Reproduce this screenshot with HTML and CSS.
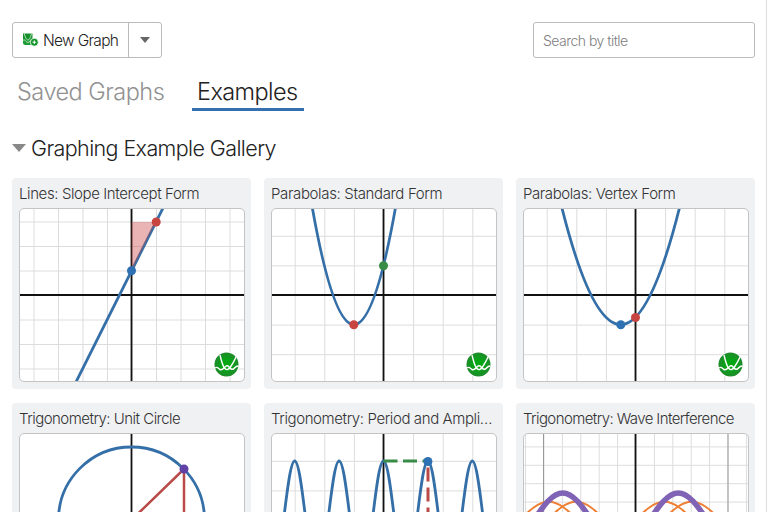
FILE: index.html
```html
<!DOCTYPE html>
<html lang="en">
<head>
<meta charset="UTF-8">
<meta name="viewport" content="width=device-width, initial-scale=1.0">
<title>Graphs</title>
<link rel="stylesheet" href="styles.css">
</head>
<body>
<!-- shared symbols -->
<svg class="defs" width="0" height="0">
  <defs>
    <radialGradient id="green">
      <stop offset="0.4" stop-color="#06a514"/>
      <stop offset="1" stop-color="#1f8a2c"/>
    </radialGradient>
    <pattern id="grid1" width="24.5" height="24.5" patternUnits="userSpaceOnUse">
      <path d="M0 .5H24.5M.5 0V24.5" class="grid"/>
    </pattern>
    <pattern id="grid2" width="29.6" height="29.6" patternUnits="userSpaceOnUse">
      <path d="M0 .5H29.6M.5 0V29.6" class="grid"/>
    </pattern>
    <pattern id="grid3" width="18.4" height="18.4" patternUnits="userSpaceOnUse">
      <path d="M0 .5H18.4M.5 0V18.4" class="grid"/>
    </pattern>
    <symbol id="badge" viewBox="-13 -13 26 26">
      <circle r="12.8" fill="#fff"/>
      <circle r="12" fill="url(#green)"/>
      <g fill="none" stroke="#fff" stroke-width="1.4">
        <path d="M-6.5 -9.5C-5 -3 -4 1 -2 3.5S2 5.5 4 2.5S8 -4 10 -8.5"/>
        <path d="M-11.7 3.5C-9 1.5 -8.5 4 -6.5 5S-3.5 4.5 -1.5 2.5S1.5 1 3 3S6.5 5.5 8 3.5S10 1.5 12 1.5"/>
      </g>
    </symbol>
  </defs>
</svg>

<div class="container">
  <div class="toolbar">
    <div class="new-graph">
      <button class="new-button">
        <svg width="16" height="14" viewBox="0 0 16 14">
          <path d="M0 .5H9.5V8H0Z" fill="#16902b"/>
          <path d="M0 6H8V12H2.5Q0 12 0 9.5Z" fill="#1c9c34"/>
          <path d="M1.2 .5C2.5 5.5 4 7 5 7S7.5 5 8.5 .5M0 7.5C2 5.5 3 9.5 5 9.5S7 6 10 7" fill="none" stroke="#d9f2dc" stroke-width=".8"/>
          <circle cx="11.3" cy="9.2" r="4" fill="#0f9226" stroke="#fff" stroke-width=".8"/>
          <path d="M9.5 9.2H13.1M11.3 7.4V11" stroke="#fff" stroke-width="1"/>
        </svg>
        <span>New Graph</span>
      </button>
      <button class="menu-button"><span class="caret"></span></button>
    </div>
    <input class="search" type="text" placeholder="Search by title">
  </div>

  <div class="tabs">
    <div class="tab">Saved Graphs</div>
    <div class="tab active">Examples</div>
  </div>

  <h2 class="gallery-title"><span class="caret"></span>Graphing Example Gallery</h2>

  <div class="gallery">
    <div class="card">
      <div class="title t1">Lines: Slope Intercept Form</div>
      <svg class="graph" viewBox="-111.5 -86 224 172">
        <rect x="-112" y="-86" width="225" height="172" fill="url(#grid1)"/>
        <path class="axis" d="M-112 0H113M0 -86V86"/>
        <path class="blue" d="M-56 88L32 -88"/>
        <path d="M0 -73L24.5 -73L0 -24Z" fill="#c74440" fill-opacity=".4"/>
        <circle cx="0" cy="-24.2" r="4.5" fill="#2d70b3"/>
        <circle cx="24.7" cy="-73" r="4.5" fill="#c74440"/>
        <use href="#badge" x="82" y="56.5" width="26" height="26"/>
      </svg>
    </div>
    <div class="card">
      <div class="title t2">Parabolas: Standard Form</div>
      <svg class="graph" viewBox="-111.5 -86 224 172">
        <rect x="-112" y="-86" width="225" height="172" fill="url(#grid2)"/>
        <path class="axis" d="M-112 0H113M0 -86V86"/>
        <path class="blue" d="M-74 -103.6Q-29.6 162.8 14.8 -103.6"/>
        <circle cx="-29.7" cy="29.8" r="4.5" fill="#c74440"/>
        <circle cx="0" cy="-29.3" r="4.5" fill="#388c46"/>
        <use href="#badge" x="82" y="56.5" width="26" height="26"/>
      </svg>
    </div>
    <div class="card">
      <div class="title t3">Parabolas: Vertex Form</div>
      <svg class="graph" viewBox="-111.5 -86 224 172">
        <rect x="-112" y="-86" width="225" height="172" fill="url(#grid2)"/>
        <path class="axis" d="M-112 0H113M0 -86V86"/>
        <path class="blue" d="M-74 -88.8Q-14.8 148 44.4 -88.8"/>
        <circle cx="-14.7" cy="29.8" r="4.5" fill="#2d70b3"/>
        <circle cx="0" cy="22.5" r="4.5" fill="#c74440"/>
        <use href="#badge" x="82" y="56.5" width="26" height="26"/>
      </svg>
    </div>
    <div class="card">
      <div class="title t4">Trigonometry: Unit Circle</div>
      <svg class="graph" viewBox="-111.5 -86 224 172">
        <path class="axis" d="M-112 0H113M0 -86V86"/>
        <circle class="blue" r="73"/>
        <path class="red" d="M0 0L52.5 -51V0"/>
        <circle cx="52.5" cy="-51" r="4.5" fill="#6042a6"/>
        <use href="#badge" x="82" y="56.5" width="26" height="26"/>
      </svg>
    </div>
    <div class="card">
      <div class="title t5">Trigonometry: Period and Ampli…</div>
      <svg class="graph" viewBox="-111.5 -86 224 172">
        <rect x="-112" y="-86" width="225" height="172" fill="url(#grid2)"/>
        <path class="axis" d="M-112 0H113M0 -86V86"/>
        <!-- cosine, one half period per segment -->
        <path class="blue" d="M-111 59c8.1 0 14.1 -118 22.2 -118s14.1 118 22.2 118s14.1 -118 22.2 -118s14.1 118 22.2 118s14.1 -118 22.2 -118s14.1 118 22.2 118s14.1 -118 22.2 -118s14.1 118 22.2 118s14.1 -118 22.2 -118s14.1 118 22.2 118"/>
        <path d="M0 -59H44.4" fill="none" stroke="#388c46" stroke-width="3" stroke-dasharray="14 5.5"/>
        <path d="M44.5 -52.5V0" fill="none" stroke="#b94a47" stroke-width="3" stroke-dasharray="14 6"/>
        <circle cx="44.4" cy="-58.5" r="4.5" fill="#2d70b3"/>
        <use href="#badge" x="82" y="56.5" width="26" height="26"/>
      </svg>
    </div>
    <div class="card">
      <div class="title t6">Trigonometry: Wave Interference</div>
      <svg class="graph" viewBox="-111.5 -86 224 172">
        <rect x="-112" y="-86" width="225" height="172" fill="url(#grid3)"/>
        <path d="M-92 -86V86M92.5 -86V86" stroke="#999" stroke-width="1"/>
        <path class="axis" d="M-112 0H113M0 -86V86"/>
        <path class="orange" d="M-144.6 18.2c21 0 36.8 -36.4 57.8 -36.4s36.8 36.4 57.8 36.4s36.8 -36.4 57.8 -36.4s36.8 36.4 57.8 36.4s36.8 -36.4 57.8 -36.4"/>
        <path class="orange" d="M-117.2 18.2c21 0 36.8 -36.4 57.8 -36.4s36.8 36.4 57.8 36.4s36.8 -36.4 57.8 -36.4s36.8 36.4 57.8 36.4s36.8 -36.4 57.8 -36.4"/>
        <path class="purple" d="M-130.6 27c21 0 36.8 -54 57.8 -54s36.8 54 57.8 54s36.8 -54 57.8 -54s36.8 54 57.8 54s36.8 -54 57.8 -54"/>
        <use href="#badge" x="82" y="56.5" width="26" height="26"/>
      </svg>
    </div>
  </div>
</div>
</body>
</html>
```
FILE: styles.css
```css
* {
  box-sizing: border-box;
}
body {
  margin: 0;
  height: 512px;
  overflow: hidden;
  background-color: #fff;
  color: #333;
  font-family: Inter, "Liberation Sans", sans-serif;
  font-weight: 300;
}
.defs {
  display: block;
}
.container {
  width: 767px;
  height: 512px;
  overflow: hidden;
  padding: 22px 12px 0;
  border-right: 1px solid #ddd;
}
.toolbar {
  display: flex;
  justify-content: space-between;
  height: 36px;
}
.new-graph {
  display: flex;
  width: 150px;
  border: 1px solid #bbb;
  border-radius: 3px;
}
button {
  display: flex;
  align-items: center;
  padding: 0;
  border: none;
  background: none;
  color: #222;
  font: inherit;
}
.new-button {
  width: 115px;
  padding-left: 10px;
  gap: 4px;
  font-size: 15.5px;
  letter-spacing: -0.7px;
  white-space: nowrap;
}
.menu-button {
  flex: 1;
  justify-content: center;
  border-left: 1px solid #bbb;
}
.caret {
  border: 5px solid transparent;
  border-top: 6px solid #666;
  border-bottom: none;
}
.search {
  width: 222px;
  margin-right: -1px;
  padding: 0 9px;
  border: 1px solid #bbb;
  border-radius: 3px;
  font: inherit;
  font-size: 14px;
  letter-spacing: -0.52px;
}
.search::placeholder {
  color: #808080;
}
.tabs {
  display: flex;
  gap: 20px;
  margin-top: 14px;
}
.tab {
  width: 160px;
  height: 39px;
  padding: 0 5px;
  color: #929292;
  font-size: 23.5px;
  line-height: 40px;
  letter-spacing: -0.5px;
  white-space: nowrap;
}
.tab.active {
  width: 112px;
  border-bottom: 3px solid #3470b0;
  color: #222;
  letter-spacing: -0.6px;
}
.gallery-title {
  display: flex;
  align-items: center;
  gap: 5px;
  height: 30px;
  margin: 22px 0 15px;
  color: #222;
  font-size: 21.5px;
  font-weight: 300;
  letter-spacing: -0.6px;
}
.gallery-title .caret {
  border-width: 8px 7px 0;
  border-top-color: #888;
}
.gallery {
  display: grid;
  grid-template-columns: repeat(3, 239px);
  gap: 14px 13px;
}
.card {
  height: 211px;
  padding: 0 6px 0 7px;
  border-radius: 4px;
  background-color: #f0f1f3;
}
.title {
  height: 30px;
  font-size: 15px;
  line-height: 32px;
  white-space: nowrap;
}
.t1 {
  letter-spacing: -0.4px;
}
.t2 {
  letter-spacing: -0.35px;
}
.t3 {
  letter-spacing: -0.41px;
}
.t4 {
  letter-spacing: -0.52px;
}
.t5 {
  letter-spacing: -0.4px;
}
.t6 {
  letter-spacing: -0.6px;
}
.graph {
  display: block;
  width: 226px;
  height: 174px;
  border: 1px solid #c4c4c4;
  border-radius: 5px;
  background-color: #fff;
}
.grid {
  fill: none;
  stroke: #dcdcdc;
  stroke-width: 1;
}
.axis {
  fill: none;
  stroke: #111;
  stroke-width: 1.8;
}
.blue {
  fill: none;
  stroke: #356fa8;
  stroke-width: 2.8;
}
.red {
  fill: none;
  stroke: #b94a47;
  stroke-width: 2.5;
}
.orange {
  fill: none;
  stroke: #ee7f35;
  stroke-width: 2;
}
.purple {
  fill: none;
  stroke: #8063b5;
  stroke-width: 5.5;
}
```
